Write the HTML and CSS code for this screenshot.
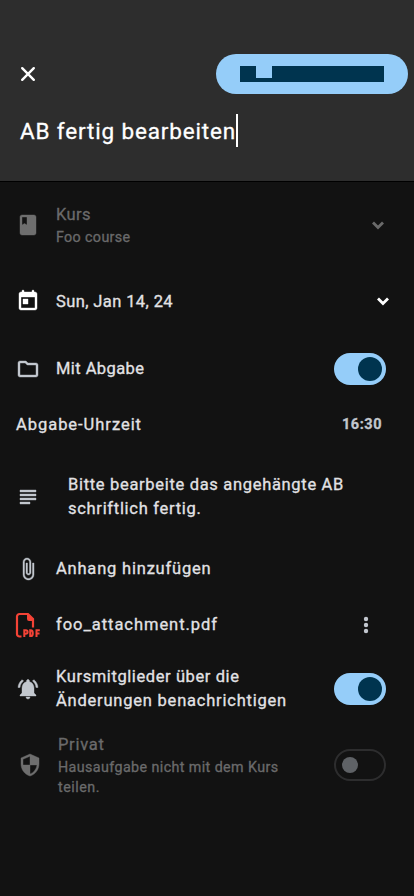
FILE: index.html
```html
<!DOCTYPE html>
<html lang="de">
<head>
<meta charset="utf-8">
<meta name="viewport" content="width=device-width, initial-scale=1">
<title>Hausaufgabe bearbeiten</title>
<link rel="stylesheet" href="styles.css">
</head>
<body>
<header class="header">
  <div class="toolbar">
    <svg class="close" viewBox="0 0 24 24"><path d="M6.200 6.200l11.600 11.600M17.800 6.200L6.200 17.800"/></svg>
    <button class="save" aria-label="Speichern"><svg viewBox="0 0 144 16"><path d="M0 0h16v12h16V0h112v16H0z"/></svg></button>
  </div>
  <div class="title"><span data-w="216">AB fertig bearbeiten</span><i class="caret"></i></div>
</header>
<main>
  <section class="row course muted">
    <svg class="icon" viewBox="0 0 24 24"><path d="M18 2H6c-1.100 0-2 .9-2 2v16c0 1.100.9 2 2 2h12c1.100 0 2-.9 2-2V4c0-1.100-.9-2-2-2zM6 4h5v8l-2.500-1.500L6 12V4z"/></svg>
    <div class="text"><p><span data-w="35">Kurs</span></p><p class="sub"><span data-w="74.500">Foo course</span></p></div>
    <svg class="chevron" viewBox="0 0 24 24"><path d="M7 9.500l5 5 5-5"/></svg>
  </section>
  <section class="row date">
    <svg class="icon" viewBox="0 0 24 24"><path d="M19 3h-1V2a1 1 0 0 0-2 0v1H8V2a1 1 0 0 0-2 0v1H5c-1.110 0-2 .9-2 2v14c0 1.100.89 2 2 2h14c1.100 0 2-.9 2-2V5c0-1.100-.9-2-2-2zm0 16H5V8h14v11zM7 10h5v5H7z"/></svg>
    <div class="text"><p><span data-w="117">Sun, Jan 14, 24</span></p></div>
    <svg class="chevron" viewBox="0 0 24 24"><path d="M7 9.500l5 5 5-5"/></svg>
  </section>
  <section class="row submit">
    <svg class="icon" viewBox="0 0 24 24"><path d="M9.170 6l2 2H20v10H4V6h5.170M10 4H4c-1.100 0-2 .9-2 2v12c0 1.100.9 2 2 2h16c1.100 0 2-.9 2-2V8c0-1.100-.9-2-2-2h-8l-2-2z"/></svg>
    <div class="text"><p><span data-w="88.500">Mit Abgabe</span></p></div>
    <div class="switch on"></div>
  </section>
  <section class="row time">
    <div class="text"><p><span data-w="126">Abgabe-Uhrzeit</span></p></div>
    <b class="clock"><span data-w="40">16:30</span></b>
  </section>
  <section class="row description">
    <svg class="icon" viewBox="0 0 24 24"><path d="M4 5h16v2H4zM4 9h16v2H4zM4 13h16v2H4zM4 17h10v2H4z"/></svg>
    <div class="text"><p><span data-w="276">Bitte bearbeite das angehängte AB</span></p><p><span data-w="133.500">schriftlich fertig.</span></p></div>
  </section>
  <section class="row attach">
    <svg class="icon" viewBox="0 0 24 24"><path d="M16.500 6v11.500c0 2.210-1.790 4-4 4s-4-1.790-4-4V5c0-1.380 1.120-2.500 2.500-2.500s2.500 1.120 2.500 2.500v10.500c0 .55-.45 1-1 1s-1-.45-1-1V6H10v9.500c0 1.380 1.120 2.500 2.500 2.500s2.500-1.120 2.500-2.500V5c0-2.210-1.790-4-4-4S7 2.790 7 5v12.500c0 3.040 2.460 5.500 5.500 5.500s5.500-2.460 5.500-5.500V6h-1.500z"/></svg>
    <div class="text"><p><span data-w="155.500">Anhang hinzufügen</span></p></div>
  </section>
  <section class="row file">
    <svg class="pdf" viewBox="0 0 24 24"><path class="line" d="M5.500 23.500H3.500A2.500 2.500 0 0 1 1 21V3.500A2.500 2.500 0 0 1 3.500 1H12l5 5v8.500"/><path class="fold" d="M11 1h1.500L18 6.500V8h-5a2 2 0 0 1-2-2z"/><path class="mark" d="M8.300 24v-6.800h1.500a1.800 1.800 0 0 1 0 3.600H8.300M14.200 17.200v5.900h.6c1.400 0 2-.7 2-2.950s-.6-2.950-2-2.950zM20.500 24v-6.800h3.300M20.500 20.500h3"/></svg>
    <div class="text"><p><span data-w="162">foo_attachment.pdf</span></p></div>
    <svg class="more" viewBox="0 0 24 24"><circle cx="12" cy="6" r="2.200"/><circle cx="12" cy="12" r="2.200"/><circle cx="12" cy="18" r="2.200"/></svg>
  </section>
  <section class="row notify">
    <svg class="icon" viewBox="0 0 24 24"><path d="M7.580 4.080L6.150 2.650C3.750 4.480 2.170 7.300 2.030 10.500h2c.15-2.650 1.510-4.970 3.550-6.420zm12.390 6.420h2c-.15-3.200-1.730-6.020-4.120-7.850l-1.420 1.430c2.020 1.450 3.390 3.770 3.540 6.420zM18 11c0-3.070-1.640-5.640-4.500-6.320V4c0-.83-.67-1.500-1.500-1.500s-1.500.67-1.500 1.500v.68C7.630 5.360 6 7.920 6 11v5l-2 2v1h16v-1l-2-2v-5zm-6 11c1.100 0 2-.9 2-2h-4c0 1.100.9 2 2 2z"/></svg>
    <div class="text"><p><span data-w="183.500">Kursmitglieder über die</span></p><p><span data-w="231">Änderungen benachrichtigen</span></p></div>
    <div class="switch on"></div>
  </section>
  <section class="row private muted">
    <svg class="icon" viewBox="0 0 24 24"><path d="M12 1L3 5v6c0 5.550 3.840 10.740 9 12 5.160-1.260 9-6.450 9-12V5l-9-4zm0 10.990h7c-.53 4.120-3.280 7.790-7 8.940V12H5V6.300l7-3.110v8.800z"/></svg>
    <div class="text"><p><span data-w="46.500">Privat</span></p><p class="sub"><span data-w="220.500">Hausaufgabe nicht mit dem Kurs</span></p><p class="sub"><span data-w="42">teilen.</span></p></div>
    <div class="switch off"></div>
  </section>
</main>
<script>
// Spread each label's letters evenly over its set width.
document.querySelectorAll('[data-w]').forEach(s => {
  const extra = s.dataset.w - s.getBoundingClientRect().width;
  s.style.letterSpacing = extra / s.textContent.length + 'px';
});
</script>
</body>
</html>
```
FILE: styles.css
```css
* { box-sizing: border-box; }
body { margin: 0; min-height: 896px; background: #121212; color: #e2e2e5; font: 400 16.5px/24px Roboto, sans-serif; -webkit-text-stroke: .3px currentColor; }
p { margin: 0; }
span { white-space: nowrap; }
svg { display: block; flex: none; }
.header { height: 182px; padding: 54px 6px 0 16px; background: #2d2d2d; border-bottom: 1px solid #000; }
.toolbar { display: flex; justify-content: space-between; align-items: center; height: 40px; }
.close { width: 24px; height: 24px; fill: none; stroke: #fff; stroke-width: 2.400; stroke-linecap: round; }
.save { width: 192px; height: 40px; padding: 0; border: 0; border-radius: 20px; background: #95cdf9; display: grid; place-items: center; }
.save svg { width: 144px; height: 16px; fill: #00344f; }
.title { display: flex; align-items: center; height: 33px; margin: 20px 0 0 4px; color: #fff; font-size: 22.5px; }
.caret { width: 2px; height: 33px; background: #fff; }
.row { display: flex; align-items: center; padding: 0 28px 0 16px; }
.icon { width: 24px; height: 24px; margin-right: 16px; fill: #c2c7ce; stroke: #c2c7ce; stroke-width: .4; stroke-linejoin: round; }
.text { flex: 1; }
.sub { font-size: 14.3px; line-height: 20px; }
.muted { color: #6a6a6b; }
.muted .icon { fill: #6e6e6e; stroke: #6e6e6e; }
.chevron { width: 24px; height: 24px; fill: none; stroke: #fff; stroke-width: 2.800; }
.course { height: 86px; padding-right: 24px; }
.course .chevron { stroke: #6a6a6a; }
.date { height: 66px; padding-right: 19px; }
.date .icon { fill: #fff; stroke: #fff; }
.date .text { padding-top: 1px; }
.submit { height: 70px; }
.time { height: 42px; padding-right: 32px; }
.clock { color: #c2c7ce; font-size: 14.5px; font-weight: 700; }
.description { height: 102px; }
.description .icon { margin-right: 28px; }
.attach { height: 42px; }
.file { height: 70px; padding-right: 36px; }
.pdf { width: 24px; height: 24px; margin-right: 16px; overflow: visible; fill: none; stroke: #f44336; stroke-width: 2.200; }
.pdf .fold { fill: #f44336; stroke: none; }
.pdf .mark { stroke-width: 2; }
.more { width: 24px; height: 24px; fill: #c2c7ce; }
.notify { height: 58px; }
.private { height: 94px; padding-left: 18px; }
.switch { width: 52px; height: 32px; padding: 4px; border-radius: 16px; display: flex; align-items: center; }
.switch::before { content: ""; border-radius: 50%; }
.on { justify-content: flex-end; background: #95cdf9; }
.on::before { width: 24px; height: 24px; background: #00344f; }
.off { padding-left: 6px; border: 2px solid #2d2d2e; }
.off::before { width: 16px; height: 16px; background: #5f6266; }
```
